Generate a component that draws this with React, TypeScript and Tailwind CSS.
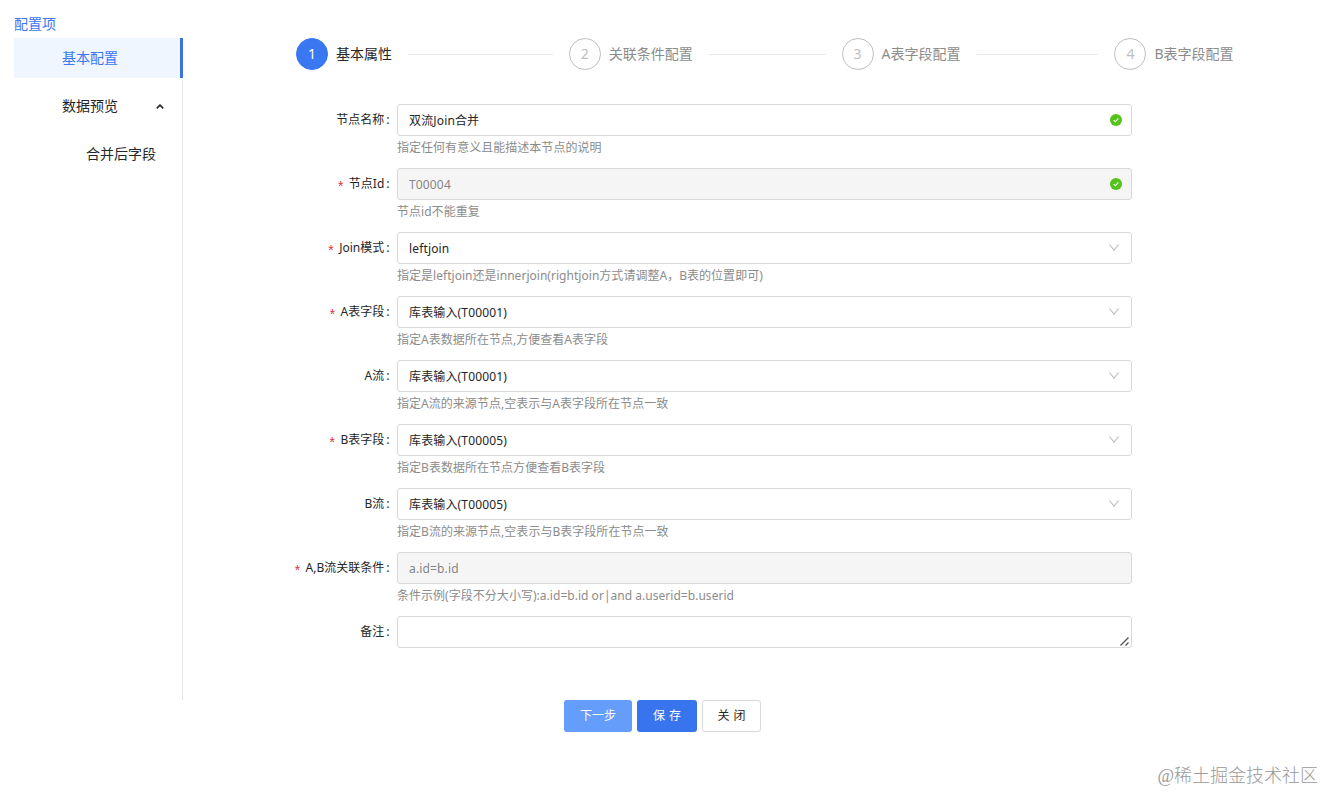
import clsx from "clsx";

type Field = {
  label: string;
  value: string;
  help?: string;
  required?: boolean;
  disabled?: boolean;
  kind: "input" | "select" | "textarea";
  valid?: boolean;
};

const STEPS = ["基本属性", "关联条件配置", "A表字段配置", "B表字段配置"];

const FIELDS: Field[] = [
  { label: "节点名称", value: "双流Join合并", help: "指定任何有意义且能描述本节点的说明", kind: "input", valid: true },
  { label: "节点Id", value: "T00004", help: "节点id不能重复", kind: "input", required: true, disabled: true, valid: true },
  { label: "Join模式", value: "leftjoin", help: "指定是leftjoin还是innerjoin(rightjoin方式请调整A，B表的位置即可)", kind: "select", required: true },
  { label: "A表字段", value: "库表输入(T00001)", help: "指定A表数据所在节点,方便查看A表字段", kind: "select", required: true },
  { label: "A流", value: "库表输入(T00001)", help: "指定A流的来源节点,空表示与A表字段所在节点一致", kind: "select" },
  { label: "B表字段", value: "库表输入(T00005)", help: "指定B表数据所在节点方便查看B表字段", kind: "select", required: true },
  { label: "B流", value: "库表输入(T00005)", help: "指定B流的来源节点,空表示与B表字段所在节点一致", kind: "select" },
  { label: "A,B流关联条件", value: "a.id=b.id", help: "条件示例(字段不分大小写):a.id=b.id or|and a.userid=b.userid", kind: "input", required: true, disabled: true },
  { label: "备注", value: "", kind: "textarea" },
];

function CheckBadge() {
  return (
    <svg className="mr-[9px] size-3 shrink-0" viewBox="0 0 12 12" fill="none">
      <circle cx="6" cy="6" r="6" fill="#52c41a" />
      <path d="M3.7 6.1 5.4 7.8 8.4 4.4" stroke="#fff" strokeWidth="1.1" />
    </svg>
  );
}

function SelectArrow() {
  return (
    <svg className="mb-px mr-3 h-[7px] w-2.5 shrink-0" viewBox="0 0 10 7" fill="none">
      <path d="M0.5 0.5 5 6.2 9.5 0.5" stroke="#bfbfbf" strokeWidth="1.1" />
    </svg>
  );
}

function Sidebar() {
  return (
    <aside className="ml-3.5 w-[169px] shrink-0 text-sm">
      <div className="h-[38px] pt-3.5 leading-5 text-[#3a78f2]">配置项</div>
      <nav className="flex h-[662px] flex-col gap-2 border-r border-[#e8e8e8] text-[#262626]">
        <div className="-mr-px flex h-10 items-center border-r-[3px] border-[#3a75dc] bg-[#eff6ff] pl-12 text-[#3a78f2]">
          基本配置
        </div>
        <div className="flex h-10 items-center justify-between pl-12 pr-[18px]">
          数据预览
          <svg className="h-[5px] w-2" viewBox="0 0 8 5" fill="none">
            <path d="M0.7 4.4 4 1.1 7.3 4.4" stroke="#262626" strokeWidth="1.5" />
          </svg>
        </div>
        <div className="flex h-10 items-center pl-[72px]">合并后字段</div>
      </nav>
    </aside>
  );
}

function Steps() {
  return (
    <div className="ml-[113px] flex h-8 w-[938.4px] items-center text-sm">
      {STEPS.map((title, i) => {
        const last = i === STEPS.length - 1;
        return (
          <div key={title} className={clsx("flex items-center", last ? "w-[120px] shrink-0" : "min-w-0 flex-1")}>
            <span
              className={clsx(
                "grid size-8 shrink-0 place-items-center rounded-full border",
                i === 0 ? "border-[#3a78f2] bg-[#3a78f2] text-white" : "border-[#bfbfbf] text-[#bfbfbf]"
              )}
            >
              {i + 1}
            </span>
            <span className={clsx("ml-2 whitespace-nowrap", i === 0 ? "text-[#262626]" : "text-[#8c8c8c]")}>{title}</span>
            {!last && <span className="mx-4 h-px flex-1 bg-[#e8e8e8]" />}
          </div>
        );
      })}
    </div>
  );
}

function FormRow({ field }: { field: Field }) {
  return (
    <div className="flex h-16">
      <div className="flex h-[31px] w-[207px] shrink-0 items-center justify-end whitespace-nowrap pr-[7.5px] text-[#262626]">
        {field.required && (
          <span className="mr-1 pt-2 font-['Liberation_Mono',monospace] text-sm leading-none text-[#d9363e]">*</span>
        )}
        {field.label}
        <span className="ml-0.5">:</span>
      </div>
      <div className="w-[735px]">
        <div
          className={clsx(
            "relative flex h-8 items-center justify-between rounded-[3px] border border-[#d9d9d9] pl-[11px]",
            field.disabled ? "bg-[#f5f5f5] text-[#858585]" : "bg-white text-[#262626]"
          )}
        >
          <span className="pt-0.5 tracking-[0.15px]">{field.value}</span>
          {field.valid && <CheckBadge />}
          {field.kind === "select" && <SelectArrow />}
          {field.kind === "textarea" && (
            <svg className="absolute bottom-px right-0.5 size-[9px]" viewBox="0 0 9 9" fill="none">
              <path d="M0.5 8.5 8.5 0.5M5.5 8.5 8.5 5.5" stroke="#555" strokeWidth="1.4" />
            </svg>
          )}
        </div>
        {field.help && (
          <p className="h-6 whitespace-nowrap leading-[23px] tracking-[0.03px] text-[#8c8c8c]">{field.help}</p>
        )}
      </div>
    </div>
  );
}

export default function App() {
  return (
    <div className="flex h-[792px] w-[1325px] flex-col overflow-hidden bg-white font-['Noto_Sans','Noto_Sans_CJK_SC',sans-serif] text-xs">
      <div className="flex h-[700px]">
        <Sidebar />
        <main className="flex-1 pt-[38px]">
          <Steps />
          <form className="ml-[7px] mt-[34px]">
            {FIELDS.map((f) => (
              <FormRow key={f.label} field={f} />
            ))}
          </form>
        </main>
      </div>
      <div className="flex gap-[5px] pl-[564px]">
        <button className="h-8 w-[68px] rounded-[3px] bg-[#659dfb] text-white">下一步</button>
        <button className="h-8 w-[60px] rounded-[3px] bg-[#3874ee] text-white [word-spacing:1px]">保 存</button>
        <button className="h-8 w-[59px] rounded-[3px] border border-[#d9d9d9] text-[#262626] [word-spacing:1px]">关 闭</button>
      </div>
      <div className="mt-auto pb-1 pr-[7px] text-right font-['Liberation_Serif','Noto_Sans_CJK_SC',serif] text-lg font-light leading-6 text-[#999]">
        @稀土掘金技术社区
      </div>
    </div>
  );
}
